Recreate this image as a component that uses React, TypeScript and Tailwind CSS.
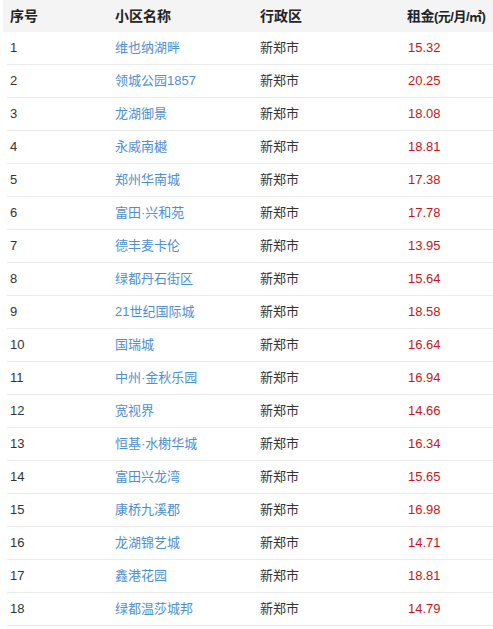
const rows: [string, string][] = [
  ["维也纳湖畔", "15.32"],
  ["领城公园1857", "20.25"],
  ["龙湖御景", "18.08"],
  ["永威南樾", "18.81"],
  ["郑州华南城", "17.38"],
  ["富田·兴和苑", "17.78"],
  ["德丰麦卡伦", "13.95"],
  ["绿都丹石街区", "15.64"],
  ["21世纪国际城", "18.58"],
  ["国瑞城", "16.64"],
  ["中州·金秋乐园", "16.94"],
  ["宽视界", "14.66"],
  ["恒基·水榭华城", "16.34"],
  ["富田兴龙湾", "15.65"],
  ["康桥九溪郡", "16.98"],
  ["龙湖锦艺城", "14.71"],
  ["鑫港花园", "18.81"],
  ["绿都温莎城邦", "14.79"],
];

export default function App() {
  return (
    <div
      className="w-[493px] h-[629px] bg-white text-[#333] text-[13px]"
      style={{ fontFamily: '"Liberation Sans", "Noto Sans CJK SC", sans-serif' }}
    >
      <div className="grid grid-cols-[102px_145px_147px_1fr] h-[32px] items-center bg-[#f4f4f4] ml-[3px] font-bold text-[14px] text-[#222] whitespace-nowrap">
        <div className="pl-[7px]">序号</div>
        <div className="pl-[10px]">小区名称</div>
        <div className="pl-[10px]">行政区</div>
        <div className="pl-[10px] tracking-[-0.5px]">
          租金<span className="text-[13px]">(元/月/㎡)</span>
        </div>
      </div>
      {rows.map(([name, rent], i) => (
        <div
          key={i}
          className="grid grid-cols-[98px_145px_147px_1fr] h-[33px] items-center border-b border-[#ececec] ml-[7px]"
        >
          <div className="pl-[3px]">{i + 1}</div>
          <div className="pl-[10px] text-[#4f8fd1]">{name}</div>
          <div className="pl-[10px]">新郑市</div>
          <div className="pl-[11px] text-[#c4161c]">{rent}</div>
        </div>
      ))}
    </div>
  );
}
